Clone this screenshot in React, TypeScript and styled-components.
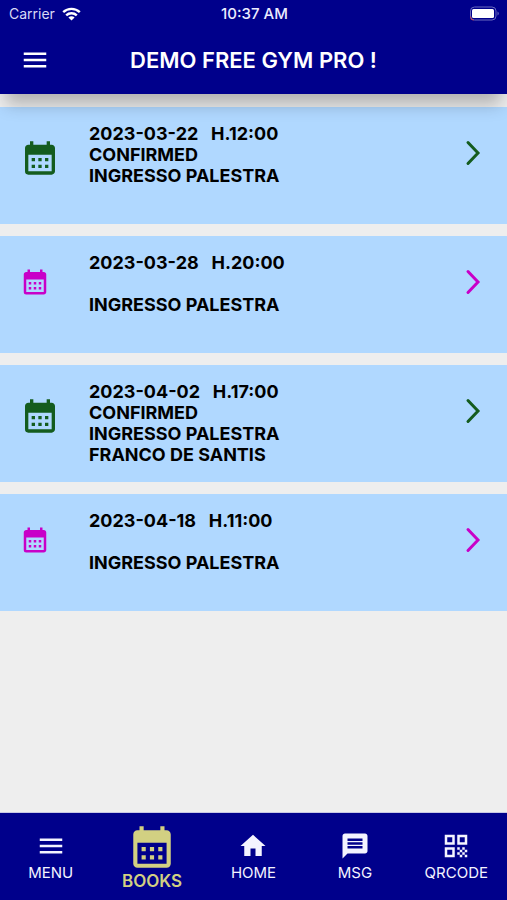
import React from "react";
import styled, { createGlobalStyle } from "styled-components";
import {
  MdCalendarMonth,
  MdHome,
  MdMenu,
  MdMessage,
  MdQrCode,
} from "react-icons/md";

const GlobalStyle = createGlobalStyle`
  *, *::before, *::after { box-sizing: border-box; }
  body {
    margin: 0;
    background: #eeeeee;
    font-family: Inter, "Liberation Sans", sans-serif;
  }
  button { font: inherit; border: 0; padding: 0; background: none; cursor: pointer; }
`;

const Screen = styled.div`
  display: flex;
  flex-direction: column;
  min-height: 100vh;
  background: #eeeeee;
`;

const Header = styled.header`
  position: relative;
  z-index: 1;
  background: #00008b;
  color: #ffffff;
  box-shadow: 0 16px 16px -6px rgba(0, 0, 0, 0.26);
`;

const StatusBar = styled.div`
  display: grid;
  grid-template-columns: 1fr auto 1fr;
  align-items: center;
  height: 27px;
  padding: 0 7px 0 9px;
  font-size: 14px;
  line-height: 20px;
`;

const Carrier = styled.span`
  display: flex;
  align-items: center;
  gap: 7px;
  color: #d9d9f5;
`;

const Clock = styled.span`
  font-size: 15px;
  font-weight: 500;
  color: #ececff;
`;

const BatteryIcon = styled.svg`
  justify-self: end;
`;

const TitleBar = styled.div`
  display: grid;
  grid-template-columns: 50px 1fr 50px;
  align-items: center;
  height: 67px;
  padding: 0 20px 2px;
`;

const MenuButton = styled.button`
  display: flex;
  color: #ffffff;
`;

const Title = styled.h1`
  margin: 0;
  font-size: 22px;
  line-height: 28px;
  font-weight: 600;
  text-align: center;
  white-space: nowrap;
`;

const List = styled.ul`
  flex: 1;
  display: flex;
  flex-direction: column;
  gap: 12px;
  margin: 0;
  padding: 13px 0;
  list-style: none;
`;

const Card = styled.button`
  display: grid;
  grid-template-columns: 69px 1fr 30px;
  width: 100%;
  min-height: 117px;
  padding: 16px 20px;
  background: #b0d8ff;
  text-align: left;
  color: #000000;
`;

const Tint = styled.span<{ $confirmed: boolean }>`
  display: flex;
  padding-top: 15px;
  color: ${(p) => (p.$confirmed ? "#145c1e" : "#c800c8")};
`;

const Details = styled.span`
  display: grid;
  grid-auto-rows: 21px;
  align-content: start;
  font-size: 18px;
  line-height: 21px;
  font-weight: 700;
  white-space: pre;
`;

const TabBar = styled.nav`
  position: sticky;
  bottom: 0;
  display: grid;
  grid-template-columns: repeat(5, 1fr);
  height: 87px;
  background: #00008b;
  box-shadow: 0 -1px 0 #c8c8e4;
`;

const Tab = styled.button<{ $active: boolean }>`
  display: flex;
  flex-direction: column;
  align-items: center;
  gap: ${(p) => (p.$active ? 0 : 3)}px;
  padding-top: ${(p) => (p.$active ? 9 : 18)}px;
  color: ${(p) => (p.$active ? "#d2d082" : "#f4f4ff")};
  font-size: ${(p) => (p.$active ? 17 : 15)}px;
  font-weight: ${(p) => (p.$active ? 600 : 400)};
  line-height: 18px;
`;

const WifiIcon = () => (
  <svg width="19" height="14" viewBox="0 0 19 14" aria-hidden="true">
    <g fill="none" stroke="#fff" strokeWidth="2.4">
      <path d="M1.2 5.2a12 12 0 0 1 16.6 0" />
      <path d="M4.2 8.4a7.6 7.6 0 0 1 10.6 0" />
    </g>
    <path d="M9.5 13.6 6.4 10.6a4.4 4.4 0 0 1 6.2 0z" fill="#fff" />
  </svg>
);

const Battery = () => (
  <BatteryIcon width="31" height="15" viewBox="0 0 31 15" role="img" aria-label="Battery">
    <rect x="1.5" y="1" width="25.5" height="13" rx="4" fill="none" stroke="#6a6abf" />
    <path d="M1.6 10.5v.6a3 3 0 0 0 3 3" fill="none" stroke="#d0505a" />
    <rect x="3" y="3" width="22" height="9" rx="1.5" fill="#fff" />
    <path d="M28.5 5.5v4a2.2 2.2 0 0 0 0-4z" fill="#6a6abf" />
  </BatteryIcon>
);

const Chevron = () => (
  <svg width="30" height="30" viewBox="0 0 30 30" aria-hidden="true">
    <path
      d="M11 4.5 21 15 11 25.5"
      fill="none"
      stroke="currentColor"
      strokeWidth="3"
      strokeLinecap="round"
    />
  </svg>
);

const bookings = [
  { date: "2023-03-22", hour: "12:00", confirmed: true, lines: ["INGRESSO PALESTRA"] },
  { date: "2023-03-28", hour: "20:00", confirmed: false, lines: ["INGRESSO PALESTRA"] },
  { date: "2023-04-02", hour: "17:00", confirmed: true, lines: ["INGRESSO PALESTRA", "FRANCO DE SANTIS"] },
  { date: "2023-04-18", hour: "11:00", confirmed: false, lines: ["INGRESSO PALESTRA"] },
];

const tabs = [
  { label: "MENU", Icon: MdMenu },
  { label: "BOOKS", Icon: MdCalendarMonth },
  { label: "HOME", Icon: MdHome },
  { label: "MSG", Icon: MdMessage },
  { label: "QRCODE", Icon: MdQrCode },
];

export default function App() {
  const [active, setActive] = React.useState("BOOKS");
  return (
    <Screen>
      <GlobalStyle />
      <Header>
        <StatusBar>
          <Carrier>
            Carrier
            <WifiIcon />
          </Carrier>
          <Clock>10:37 AM</Clock>
          <Battery />
        </StatusBar>
        <TitleBar>
          <MenuButton aria-label="Open menu">
            <MdMenu size={30} />
          </MenuButton>
          <Title>DEMO FREE GYM PRO !</Title>
        </TitleBar>
      </Header>
      <List>
        {bookings.map((b) => (
          <li key={b.date}>
            <Card>
              <Tint $confirmed={b.confirmed}>
                <MdCalendarMonth size={b.confirmed ? 40 : 30} />
              </Tint>
              <Details>
                <span>{`${b.date}   H.${b.hour}`}</span>
                <span>{b.confirmed ? "CONFIRMED" : ""}</span>
                {b.lines.map((line) => (
                  <span key={line}>{line}</span>
                ))}
              </Details>
              <Tint $confirmed={b.confirmed}>
                <Chevron />
              </Tint>
            </Card>
          </li>
        ))}
      </List>
      <TabBar>
        {tabs.map(({ label, Icon }) => (
          <Tab key={label} $active={label === active} onClick={() => setActive(label)}>
            <Icon size={label === active ? 50 : 30} />
            {label}
          </Tab>
        ))}
      </TabBar>
    </Screen>
  );
}
